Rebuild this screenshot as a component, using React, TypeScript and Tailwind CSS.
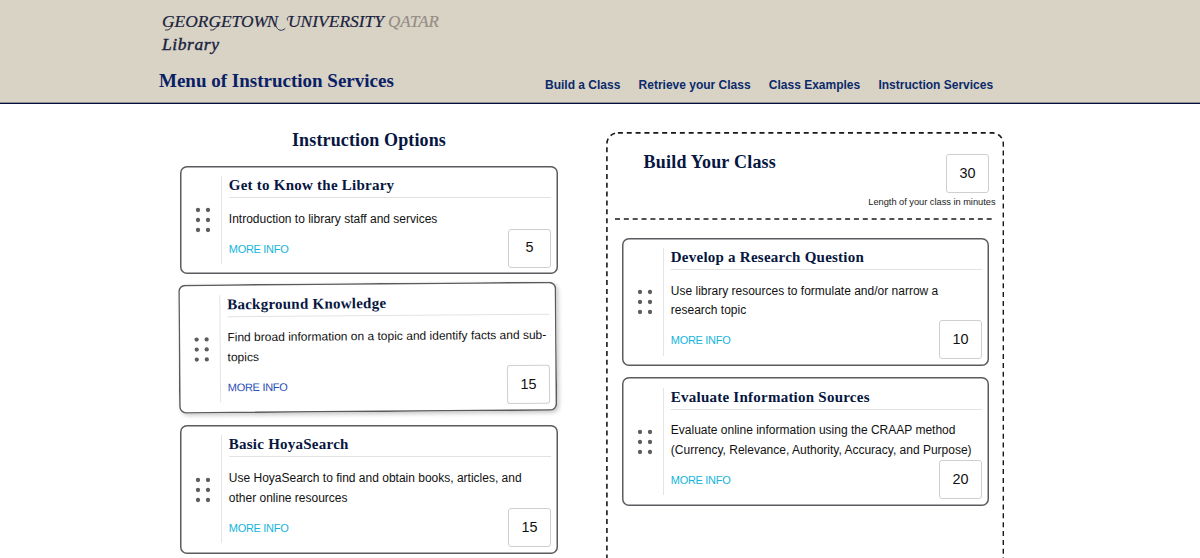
import type { ReactNode } from "react";

type Service = {
  title: string;
  lines: string[];
  minutes: number;
};

const options: Service[] = [
  { title: "Get to Know the Library", lines: ["Introduction to library staff and services"], minutes: 5 },
  { title: "Background Knowledge", lines: ["Find broad information on a topic and identify facts and sub-", "topics"], minutes: 15 },
  { title: "Basic HoyaSearch", lines: ["Use HoyaSearch to find and obtain books, articles, and", "other online resources"], minutes: 15 },
];

const chosen: Service[] = [
  { title: "Develop a Research Question", lines: ["Use library resources to formulate and/or narrow a", "research topic"], minutes: 10 },
  { title: "Evaluate Information Sources", lines: ["Evaluate online information using the CRAAP method", "(Currency, Relevance, Authority, Accuracy, and Purpose)"], minutes: 20 },
];

const navItems = ["Build a Class", "Retrieve your Class", "Class Examples", "Instruction Services"];

function Logo() {
  return (
    <svg width="290" height="50" viewBox="156 8 290 50" className="block" fill="#1a2340" stroke="#1a2340" strokeWidth="0.2" fontFamily="'Liberation Serif', serif" fontStyle="italic">
      <text x="162" y="27.2" fontSize="16.5" textLength="106" lengthAdjust="spacingAndGlyphs">GEORGETOW</text>
      <text x="267" y="27.2" fontSize="16.5">N</text>
      <text x="288" y="27.2" fontSize="16.5" textLength="96" lengthAdjust="spacingAndGlyphs">UNIVERSITY</text>
      <text x="388" y="27.2" fontSize="16.5" textLength="51" lengthAdjust="spacingAndGlyphs" fill="#968d86" stroke="#968d86">QATAR</text>
      <text x="162" y="50.3" fontSize="17.5" strokeWidth="0.4" textLength="57">Library</text>
      <g fill="none" strokeWidth="0.9" strokeLinecap="round">
        <path d="M172.500 23.500C172 28 169 30.800 165.500 30" />
        <path d="M217.500 23.500C217 28 214 30.800 210.500 30" />
        <path d="M276 26C277.500 31 282 31.500 285 28.600" />
        <path d="M292 16.500C288.500 15.500 286 18 287.600 20.300" />
      </g>
    </svg>
  );
}

function MinutesBox({ children }: { children: ReactNode }) {
  return (
    <div className="flex h-[39px] w-[43px] items-center justify-center rounded-[3px] border border-[#cfcfcf] bg-white text-[14.4px] text-[#111]">
      {children}
    </div>
  );
}

function DragHandle() {
  return (
    <svg width="16" height="26" viewBox="0 0 16 26" fill="#5c5d61">
      {[3, 13].map((x) => [3, 13, 23].map((y) => <circle key={`${x}-${y}`} cx={x} cy={y} r="2.15" />))}
    </svg>
  );
}

function ServiceCard({ service, lifted = false }: { service: Service; lifted?: boolean }) {
  return (
    <article
      className={
        lifted
          ? "relative flex -translate-x-[1.3px] -translate-y-[1.8px] -rotate-[0.45deg] rounded-[7px] bg-white py-[10.5px] pr-[7px] shadow-[inset_0_0_0_1.5px_#5a5b5f,2px_2px_4px_rgba(0,0,0,0.22)]"
          : "relative flex rounded-[7px] bg-white py-[10.5px] pr-[7px] shadow-[inset_0_0_0_1.5px_#5a5b5f]"
      }
    >
      <div className="flex w-[41.5px] items-center justify-center border-r border-[#e4e4e4] pt-[1px] pl-[6px]">
        <DragHandle />
      </div>
      <div className="flex-1 pl-[7.3px]">
        <h3 className="h-[22px] border-b border-[#e2e2e2] font-['Liberation_Serif',serif] text-[15px] leading-[18px] font-bold tracking-[0.24px] text-[#06163f]">
          {service.title}
        </h3>
        <div className="pt-[11.5px] text-[12px] leading-[19.8px] whitespace-nowrap text-[#111]">
          {service.lines.map((line) => (
            <p key={line}>{line}</p>
          ))}
        </div>
        <a
          className={
            lifted
              ? "mt-[11.2px] block h-[23.3px] text-[11px] leading-[16px] tracking-[-0.3px] text-[#1f4bb5]"
              : "mt-[11.2px] block h-[23.3px] text-[11px] leading-[16px] tracking-[-0.3px] text-[#14b4dc]"
          }
        >
          MORE INFO
        </a>
      </div>
      <div className="absolute right-[7px] bottom-[6.6px]">
        <MinutesBox>{service.minutes}</MinutesBox>
      </div>
    </article>
  );
}

export default function App() {
  return (
    <div className="h-[558px] w-[1200px] overflow-hidden bg-white font-['Liberation_Sans',Arial,sans-serif]">
      <header className="h-[104px] border-b border-[#020f38] bg-[#d9d3c5] shadow-[inset_0_-1px_0_#8f8f92]">
        <div className="pt-2 pl-[156px]">
          <Logo />
        </div>
        <div className="flex pl-[159px]">
          <h1 className="w-[386px] pt-[11px] font-['Liberation_Serif',serif] text-[19px] leading-[24px] font-bold text-[#0a2066]">
            Menu of Instruction Services
          </h1>
          <nav className="flex gap-[18.2px] pt-[19px] text-[12px] leading-[16px] font-bold text-[#0a2a6b]">
            {navItems.map((item) => (
              <a key={item}>{item}</a>
            ))}
          </nav>
        </div>
      </header>

      <main className="flex pl-[180px]">
        <section className="w-[378px]">
          <h2 className="pt-[24px] pb-[13.6px] text-center font-['Liberation_Serif',serif] text-[18px] leading-[24px] font-bold tracking-[0.13px] text-[#06163f]">
            Instruction Options
          </h2>
          <div className="flex flex-col gap-[11px]">
            {options.map((service, i) => (
              <ServiceCard key={service.title} service={service} lifted={i === 1} />
            ))}
          </div>
        </section>

        <section className="relative mt-[28px] ml-[48px] h-[460px] w-[398px]">
          <svg className="absolute inset-0" width="398" height="460" fill="none" stroke="#18181a" strokeWidth="1.6" strokeDasharray="5 3.85">
            <rect x="0.9" y="0.9" width="396.5" height="480" rx="11" />
            <path d="M9 87H389" />
          </svg>
          <div className="flex h-[105.5px] justify-between pt-[22px] pr-[8.5px] pl-[37.5px]">
            <h2 className="font-['Liberation_Serif',serif] text-[18px] leading-[17px] font-bold tracking-[0.22px] text-[#06163f]">
              Build Your Class
            </h2>
            <div className="flex flex-col items-end">
              <div className="pr-[6.5px]">
                <MinutesBox>30</MinutesBox>
              </div>
              <p className="pt-[2px] text-[9.3px] leading-[15px] tracking-[-0.03px] text-[#222]">Length of your class in minutes</p>
            </div>
          </div>
          <div className="flex flex-col gap-[11px] pr-[15px] pl-[16px]">
            {chosen.map((service) => (
              <ServiceCard key={service.title} service={service} />
            ))}
          </div>
        </section>
      </main>
    </div>
  );
}
